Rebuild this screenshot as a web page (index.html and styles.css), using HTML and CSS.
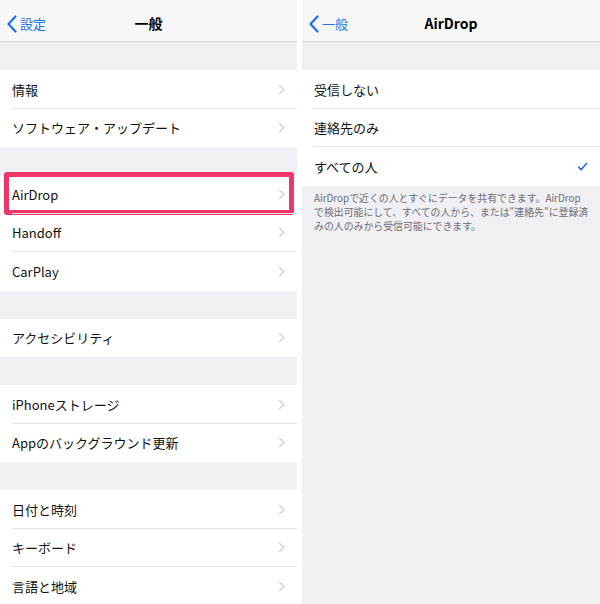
FILE: index.html
```html
<!DOCTYPE html>
<html lang="ja">
<head>
    <meta charset="UTF-8">
    <meta name="viewport" content="width=device-width, initial-scale=1.0">
    <title>一般 / AirDrop</title>
    <link rel="stylesheet" href="styles.css">
</head>
<body>
    <div class="screens">
        <!-- 一般 -->
        <div class="screen">
            <header class="navbar">
                <span class="back">
                    <svg class="back-icon" viewBox="0 0 10 18" width="10" height="18"><path d="M8.5 1.5 L1.5 9 L8.5 16.5" fill="none" stroke="#1a73e0" stroke-width="2.2" stroke-linecap="round" stroke-linejoin="round"/></svg>
                    設定
                </span>
                <h1>一般</h1>
            </header>
            <div class="group">
                <div class="row">情報<i class="chev"></i></div>
                <div class="row">ソフトウェア・アップデート<i class="chev"></i></div>
            </div>
            <div class="group">
                <div class="row highlight">AirDrop<i class="chev"></i></div>
                <div class="row">Handoff<i class="chev"></i></div>
                <div class="row">CarPlay<i class="chev"></i></div>
            </div>
            <div class="group">
                <div class="row">アクセシビリティ<i class="chev"></i></div>
            </div>
            <div class="group">
                <div class="row">iPhoneストレージ<i class="chev"></i></div>
                <div class="row">Appのバックグラウンド更新<i class="chev"></i></div>
            </div>
            <div class="group">
                <div class="row">日付と時刻<i class="chev"></i></div>
                <div class="row">キーボード<i class="chev"></i></div>
                <div class="row">言語と地域<i class="chev"></i></div>
            </div>
        </div>

        <!-- AirDrop -->
        <div class="screen">
            <header class="navbar">
                <span class="back">
                    <svg class="back-icon" viewBox="0 0 10 18" width="10" height="18"><path d="M8.5 1.5 L1.5 9 L8.5 16.5" fill="none" stroke="#1a73e0" stroke-width="2.2" stroke-linecap="round" stroke-linejoin="round"/></svg>
                    一般
                </span>
                <h1>AirDrop</h1>
            </header>
            <div class="group">
                <div class="row">受信しない</div>
                <div class="row">連絡先のみ</div>
                <div class="row">すべての人
                    <svg class="check" viewBox="0 0 12 10" width="11" height="9"><path d="M1.5 5.5 L4.5 8.5 L10.5 1.5" fill="none" stroke="#1a6fdc" stroke-width="1.7" stroke-linecap="round" stroke-linejoin="round"/></svg>
                </div>
            </div>
            <p class="footnote">AirDropで近くの人とすぐにデータを共有できます。AirDrop<br>で検出可能にして、すべての人から、または"連絡先"に登録済<br>みの人のみから受信可能にできます。</p>
        </div>
    </div>
</body>
</html>
```

FILE: styles.css
```css
body, html {
    margin: 0;
    padding: 0;
    height: 100%;
    background-color: #ffffff;
    font-family: "Noto Sans CJK JP", "Noto Sans", sans-serif;
}
.screens {
    display: flex;
    gap: 5px;
    height: 604px;
    overflow: hidden;
}
.screen {
    flex: 1;
    background-color: #efeff4;
    overflow: hidden;
}
.screen:first-child {
    flex: 0 0 297px;
}
.navbar {
    position: relative;
    padding-top: 5px;
    box-sizing: border-box;
    height: 42px;
    background-color: #f7f7f8;
    border-bottom: 1px solid #d8d8dc;
    display: flex;
    align-items: center;
    justify-content: center;
}
.navbar h1 {
    margin: 0;
    font-size: 14px;
    font-weight: 600;
    color: #000000;
}
.back {
    position: absolute;
    left: 7px;
    top: 15px;
    display: flex;
    align-items: center;
    gap: 3px;
    font-size: 13px;
    color: #1a73e0;
    line-height: 18px;
}
.group {
    margin-top: 28px;
    background-color: #ffffff;
}
.row {
    position: relative;
    height: 38.5px;
    display: flex;
    align-items: center;
    padding: 0 12px;
    font-size: 13px;
    color: #111111;
}
.group .row:not(:last-child)::after {
    content: "";
    position: absolute;
    left: 12px;
    right: 0;
    bottom: 0;
    height: 1px;
    background-color: #e4e4e8;
}
.chev {
    margin-left: auto;
    width: 6px;
    height: 6px;
    border-top: 1.5px solid #c4c4c8;
    border-right: 1.5px solid #c4c4c8;
    transform: rotate(45deg);
    margin-right: 2px;
}
.check {
    margin-left: auto;
    margin-right: 0;
}
.highlight::before {
    content: "";
    position: absolute;
    left: 4px;
    right: 3px;
    top: -3px;
    bottom: -1px;
    border: 5px solid #ef366a;
    border-radius: 3px;
    pointer-events: none;
}
.footnote {
    margin: 0;
    padding: 5px 4px 0 12px;
    font-size: 9.9px;
    line-height: 14px;
    color: #6d6d72;
    white-space: nowrap;
}
```
